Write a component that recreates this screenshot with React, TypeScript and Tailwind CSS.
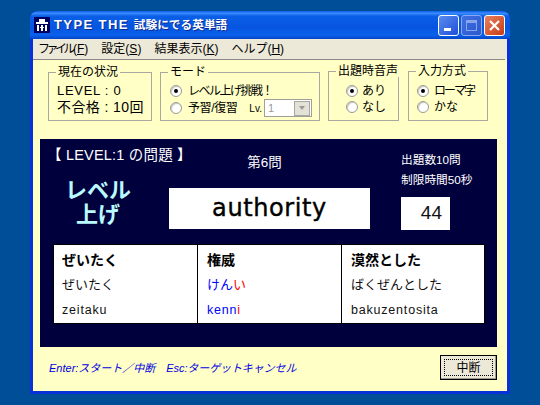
import React from "react";

const jp = { fontFamily: '"Liberation Sans","Noto Sans CJK JP",sans-serif' };

function Radio({ on, label, gap = "gap-[6px]", track = "" }: { on?: boolean; label: string; gap?: string; track?: string }) {
  return (
    <div className={`flex items-center ${gap} h-[16px]`}>
      <span className="w-[12px] h-[12px] rounded-full bg-white border border-[#9a9a92] flex items-center justify-center shrink-0 shadow-[inset_1px_1px_1px_#c8c8c0]">
        {on && <span className="w-[4px] h-[4px] rounded-full bg-black" />}
      </span>
      <span className={`text-[12px] leading-[16px] text-black whitespace-nowrap ${track}`}>{label}</span>
    </div>
  );
}

function Group({ title, className, inner, children }: { title: string; className: string; inner: string; children: React.ReactNode }) {
  return (
    <fieldset className={`border border-[#a8a8a0] shrink-0 m-0 p-0 min-w-0 ${className}`}>
      <legend className="ml-[7px] px-[2px] text-[12px] leading-[12px] text-black whitespace-nowrap">{title}</legend>
      <div className={inner}>{children}</div>
    </fieldset>
  );
}

function Cell({ a, b, c, className }: { a: string; b: React.ReactNode; c: React.ReactNode; className: string }) {
  return (
    <div className={`shrink-0 pt-[5px] flex flex-col ${className}`}>
      <div className="text-[14px] leading-[20px] font-bold text-black whitespace-nowrap">{a}</div>
      <div className="text-[13px] leading-[20px] mt-[5px] text-[#111] whitespace-nowrap">{b}</div>
      <div className="text-[12.5px] leading-[20px] mt-[5px] text-[#111] whitespace-nowrap tracking-[0.8px]">{c}</div>
    </div>
  );
}

export default function App() {
  return (
    <div style={jp} className="w-[540px] h-[405px] bg-[#004e98] pl-[30px] pt-[11px] overflow-hidden">
      <div className="w-[480px] h-[383px] rounded-t-[8px] bg-[#0831d9] flex flex-col overflow-hidden">
        {/* title bar */}
        <div className="h-[28px] shrink-0 flex items-center pl-[4px] pr-[5px] bg-[linear-gradient(180deg,#0a5ce8_0%,#3c8cff_8%,#0a5fe6_18%,#0654e0_60%,#0a62ec_85%,#0446c8_100%)]">
          <svg width="16" height="16" viewBox="0 0 16 16" className="shrink-0">
            <rect width="16" height="16" fill="#000060" />
            <rect x="5" y="2" width="6" height="3" fill="#fff" />
            <rect x="2" y="5" width="12" height="2" fill="#fff" />
            <rect x="3" y="8" width="2" height="6" fill="#fff" />
            <rect x="7" y="8" width="2" height="6" fill="#fff" />
            <rect x="11" y="8" width="2" height="6" fill="#fff" />
            <rect x="6" y="10" width="4" height="1" fill="#fff" />
          </svg>
          <span className="ml-[4px] text-white text-[13px] font-bold tracking-[1.4px] whitespace-nowrap [text-shadow:1px_1px_0_#0a2a90]">
            TYPE THE
          </span>
          <span className="ml-[5px] text-white text-[11.7px] font-bold whitespace-nowrap [text-shadow:1px_1px_0_#0a2a90]">
            試験にでる英単語
          </span>
          <div className="ml-auto flex gap-[2px]">
            <div className="w-[21px] h-[21px] rounded-[3px] border border-white bg-[linear-gradient(135deg,#5a8cf0,#2050d8)] flex items-end pl-[5px] pb-[4px]">
              <span className="w-[7px] h-[3px] bg-white" />
            </div>
            <div className="w-[21px] h-[21px] rounded-[3px] border border-[#8aa8f0] bg-[linear-gradient(135deg,#3f70e0,#2a58d0)] flex items-center justify-center">
              <span className="w-[11px] h-[11px] border border-[#87a4ec] border-t-[3px]" />
            </div>
            <div className="w-[21px] h-[21px] rounded-[3px] border border-white bg-[linear-gradient(135deg,#e88060,#c83c14)] flex items-center justify-center">
              <svg width="13" height="13" viewBox="0 0 13 13">
                <path d="M2 2 L11 11 M11 2 L2 11" stroke="#fff" strokeWidth="2.2" />
              </svg>
            </div>
          </div>
        </div>
        {/* body */}
        <div className="flex-1 mx-[3px] mb-[3px] bg-[#ffffc6] flex flex-col min-h-0">
          <div className="h-[20px] shrink-0 bg-[#ece9d8] flex items-center pl-[5px] gap-[13px] text-[12px] leading-[20px] text-black">
            <span><span className="tracking-[-3.5px] mr-[1px]">ファイル</span>(<u>F</u>)</span>
            <span>設定(<u>S</u>)</span>
            <span>結果表示(<u>K</u>)</span>
            <span>ヘルプ(<u>H</u>)</span>
          </div>
          <div className="h-px shrink-0 bg-[#8a8a84] mr-[2px]" />
          {/* groups */}
          <div className="h-[63px] shrink-0 flex pl-[15px] pt-[6px]">
            <Group title="現在の状況" className="w-[104px] h-[55px]" inner="pl-[8px] pt-[5px]">
              <div className="text-[13px] leading-[16px] text-black whitespace-nowrap tracking-[0.7px]">LEVEL : 0</div>
              <div className="text-[14px] leading-[16px] text-black whitespace-nowrap tracking-[0.4px]">不合格 : 10回</div>
            </Group>
            <Group title="モード" className="w-[160px] h-[55px] ml-[8px]" inner="pl-[9px] pt-[5px]">
              <Radio on label="レベル上げ挑戦！" track="tracking-[-1.5px]" />
              <div className="flex items-center">
                <Radio label="予習/復習" track="tracking-[-0.4px]" />
                <span className="ml-[12px] text-[10px] text-black">Lv.</span>
                <div className="ml-[2px] w-[48px] h-[18px] border border-[#a0a098] bg-white flex items-center justify-between pl-[3px] pr-px">
                  <span className="text-[11px] leading-[14px] text-[#999]">1</span>
                  <span className="w-[16px] h-[15px] bg-[#e4e2d6] border border-[#a8a8a0] flex items-center justify-center">
                    <span className="border-x-[3px] border-x-transparent border-t-[4px] border-t-[#999]" />
                  </span>
                </div>
              </div>
            </Group>
            <Group title="出題時音声" className="w-[71px] h-[56px] ml-[8px] -mt-px" inner="pl-[17px] pt-[6px]">
              <Radio on label="あり" gap="gap-[4px]" />
              <Radio label="なし" gap="gap-[4px]" />
            </Group>
            <Group title="入力方式" className="w-[80px] h-[56px] ml-[9px] -mt-px" inner="pl-[8px] pt-[6px]">
              <Radio on label="ローマ字" gap="gap-[5px]" track="tracking-[-2px]" />
              <Radio label="かな" gap="gap-[5px]" />
            </Group>
          </div>
          {/* game panel */}
          <div className="ml-[7px] w-[457px] h-[208px] mt-[16px] shrink-0 bg-[#00003c] flex flex-col px-[13px]">
            <div className="h-[105px] shrink-0 flex -mx-[13px]">
              <div className="w-[129px] shrink-0 pl-[7px] pt-[6px] flex flex-col">
                <span className="text-white text-[14.5px] leading-[20px] whitespace-nowrap tracking-[0.2px]">【 LEVEL:1 の問題 】</span>
                <div className="mt-[14px] self-start ml-[15px] w-[72px] text-center text-[#bafaff] text-[22px] leading-[24px] font-bold whitespace-nowrap">
                  <div>レベル</div>
                  <div>上げ</div>
                </div>
              </div>
              <div className="w-[201px] shrink-0 flex flex-col items-center">
                <span className="text-white text-[13.5px] leading-[16px] mt-[16px] -ml-[10px]">第6問</span>
                <div className="mt-[17px] w-[201px] h-[41px] bg-white flex items-center justify-center text-[24px] leading-[41px] text-black tracking-[0.6px] [-webkit-text-stroke:0.4px_#000]" style={{ fontFamily: '"DejaVu Sans",sans-serif' }}>
                  authority
                </div>
              </div>
              <div className="flex-1 flex flex-col pl-[31px] pt-[11px]">
                <span className="text-white text-[11.7px] leading-[20px] whitespace-nowrap">出題数10問</span>
                <span className="text-white text-[11.7px] leading-[19px] whitespace-nowrap">制限時間50秒</span>
                <div className="mt-[8px] w-[49px] h-[33px] bg-white flex items-center justify-end pr-[8px] text-[19px] text-[#111]">44</div>
              </div>
            </div>
            <div className="w-[432px] h-[80px] bg-white border border-black flex">
              <Cell className="w-[143px] pl-[8px]" a="ぜいたく" b="ぜいたく" c="zeitaku" />
              <Cell
                className="w-[144px] pl-[9px] border-l border-black"
                a="権威"
                b={<><span className="text-[#0000ff]">けん</span><span className="text-[#ff0000]">い</span></>}
                c={<><span className="text-[#0000ff]">kenn</span><span className="text-[#ff0000]">i</span></>}
              />
              <Cell className="w-[143px] pl-[9px] border-l border-black" a="漠然とした" b="ばくぜんとした" c="bakuzentosita" />
            </div>
          </div>
          {/* footer */}
          <div className="flex-1 flex pl-[16px] pr-[10px] pt-[8px] items-start">
            <div className="mt-[5px] flex gap-[11px] text-[11px] leading-[16px] italic text-[#0000e0] whitespace-nowrap">
              <span>Enter:スタート／中断</span>
              <span className="tracking-[-0.1px]">Esc:ターゲットキャンセル</span>
            </div>
            <div className="ml-auto w-[57px] h-[25px] border border-black bg-[#ece9d8] shadow-[inset_-1px_-1px_0_#9a9a90] p-[3px]">
              <div className="w-full h-full border border-dotted border-black flex items-center justify-center text-[12px] text-black">中断</div>
            </div>
          </div>
        </div>
      </div>
    </div>
  );
}
